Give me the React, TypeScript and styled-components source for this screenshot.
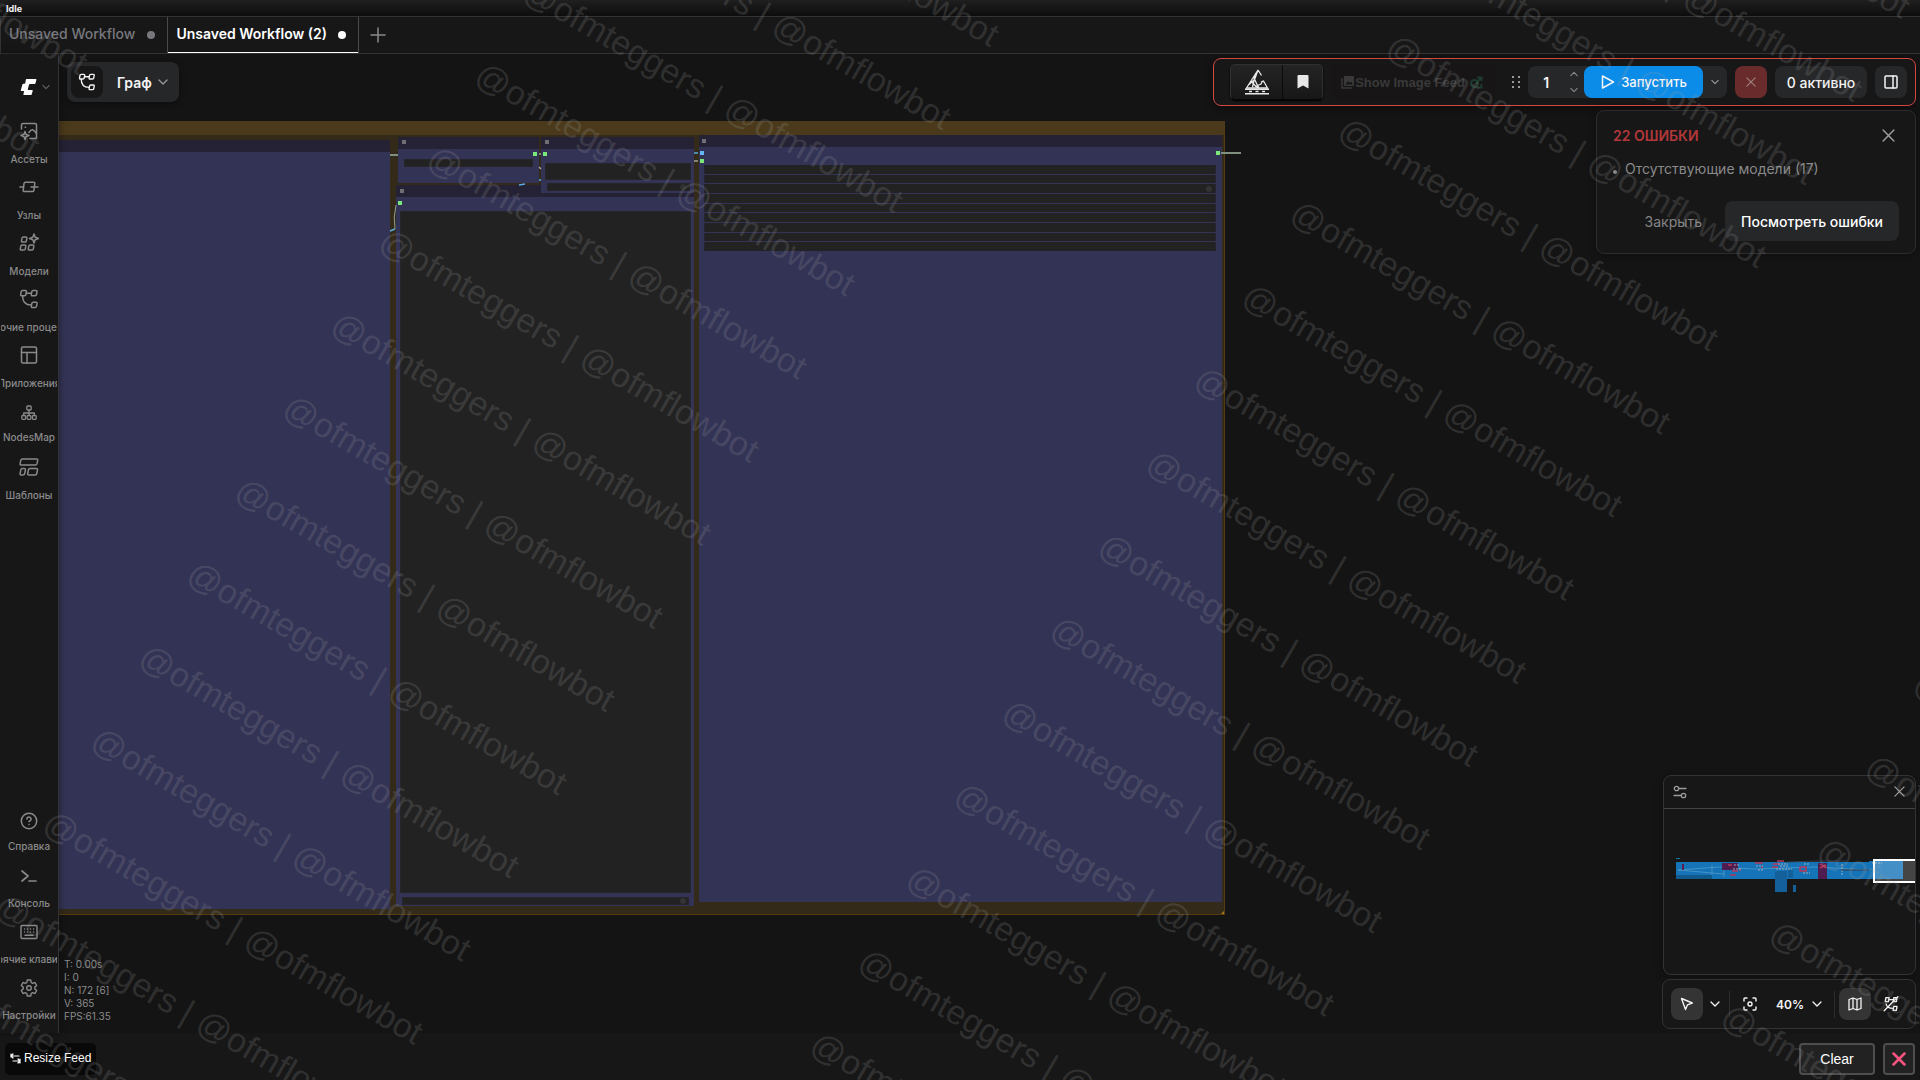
import React from "react";
import styled, { createGlobalStyle, css } from "styled-components";

const colors = {
  canvas: "#141414",
  panel: "#171718",
  raised: "#262729",
  line: "#333335",
  text: "#f5f5f5",
  muted: "#8a8a8a",
  node: "#333355",
  nodeTitle: "#242234",
  widget: "#222222",
};

const Global = createGlobalStyle`
  *, *::before, *::after { box-sizing: border-box; }
  html, body { margin: 0; height: 100%; background: ${colors.panel}; overflow: hidden; }
  body { font-family: Inter, "Liberation Sans", sans-serif; font-size: 14px; color: ${colors.text}; }
  button, input { font: inherit; color: inherit; }
  button { border: 0; padding: 0; background: none; cursor: pointer; }
  svg { display: block; flex: none; }
`;

const Page = styled.div`
  display: flex;
  flex-direction: column;
  height: 100vh;
  position: relative;
`;

/* ---------- top ---------- */

const StatusBar = styled.header`
  height: 16px;
  padding-left: 6px;
  font-size: 9px;
  line-height: 17px;
  font-weight: 700;
  background: linear-gradient(#1f1f1f, #0d0d0d);
  flex: none;
`;

const TabBar = styled.nav`
  display: flex;
  height: 38px;
  flex: none;
  border: 1px solid ${colors.line};
  border-right: 0;
  background: ${colors.panel};
`;

const Tab = styled.button<{ $active?: boolean }>`
  display: flex;
  align-items: center;
  gap: ${(p) => (p.$active ? 11 : 12)}px;
  padding: 0 12px 4px 8px;
  border-right: 1px solid #4a4a4c;
  color: ${(p) => (p.$active ? "#ffffff" : "#77777d")};
  font-weight: ${(p) => (p.$active ? 600 : 500)};
  ${(p) => p.$active && css`box-shadow: inset 0 -1px #ffffff;`}
`;

const Dot = styled.span`
  width: 8px;
  height: 8px;
  margin-top: 4px;
  border-radius: 50%;
  background: currentColor;
`;

const AddTab = styled.button`
  width: 38px;
  display: grid;
  place-items: center;
  color: ${colors.muted};
`;

const Main = styled.main`
  flex: 1;
  min-height: 0;
  display: flex;
`;

/* ---------- sidebar ---------- */

const Sidebar = styled.aside`
  width: 59px;
  flex: none;
  display: flex;
  flex-direction: column;
  background: ${colors.panel};
  border-right: 1px solid ${colors.line};
  box-shadow: 0 0 8px rgba(0, 0, 0, 0.4);
  z-index: 1;
`;

const LogoButton = styled.button`
  display: flex;
  align-items: center;
  gap: 5px;
  height: 48px;
  padding-left: 20px;
  margin: 9px 0 4px;
`;

const SideGroup = styled.div<{ $bottom?: boolean }>`
  display: flex;
  flex-direction: column;
  ${(p) => p.$bottom && css`margin-top: auto; margin-bottom: 5px;`}
`;

const SideItem = styled.button<{ $gap: number; $top: number }>`
  height: 56px;
  overflow: hidden;
  display: flex;
  flex-direction: column;
  align-items: center;
  justify-content: center;
  gap: ${(p) => p.$gap}px;
  padding-top: ${(p) => p.$top}px;
  color: ${colors.muted};
  font-size: 10px;
  line-height: 12px;
  font-weight: 500;
  white-space: nowrap;
`;

const SideLabel = styled.span`
  display: flex;
  justify-content: center;
  width: 56px;
  overflow: hidden;
`;

/* ---------- graph canvas ---------- */

const Canvas = styled.section`
  flex: 1;
  position: relative;
  overflow: hidden;
  background: ${colors.canvas};
`;

const World = styled.div`
  position: absolute;
  inset: 0;
  transform: translate(-59px, -54px);
`;

type Box = { $x: number; $y: number; $w: number; $h: number };

const place = css<Box>`
  position: absolute;
  left: ${(p) => p.$x}px;
  top: ${(p) => p.$y}px;
  width: ${(p) => p.$w}px;
  height: ${(p) => p.$h}px;
`;

const GroupBox = styled.div<Box>`
  ${place}
  background: #332a19;
  border: 1px solid #553b12;
  border-top: 14px solid #4a3a1b;
`;

const NodeBox = styled.div<Box>`
  ${place}
  background: ${colors.node};
  border-top: 12px solid ${colors.nodeTitle};
`;

const Widget = styled.div<Box>`
  ${place}
  background: ${colors.widget};
  border: 1px solid #26252c;
`;

const WidgetStack = styled.div<Box>`
  ${place}
  display: grid;
  gap: 1px;
  grid-auto-rows: 1fr;
`;

const StackRow = styled.div`
  background: ${colors.widget};
  border: 1px solid #26252f;
  border-width: 0 1px;
`;

const Slot = styled.div<{ $x: number; $y: number; $color: string }>`
  position: absolute;
  left: ${(p) => p.$x}px;
  top: ${(p) => p.$y}px;
  width: 4px;
  height: 4px;
  background: ${(p) => p.$color};
`;

const Links = styled.svg`
  position: absolute;
  left: 0;
  top: 0;
  overflow: visible;
`;

const Stats = styled.div`
  position: absolute;
  left: 5px;
  bottom: 10px;
  font-size: 10px;
  line-height: 13px;
  color: #8c8c8c;
  white-space: pre-line;
`;

/* ---------- floating panels ---------- */

const Overlay = styled.div`
  position: absolute;
  inset: 0;
  display: flex;
  justify-content: space-between;
  align-items: flex-start;
  padding: 4px 4px 4px 8px;
`;

const RightColumn = styled.div`
  display: flex;
  flex-direction: column;
  align-items: flex-end;
  height: 100%;
`;

const ModeButton = styled.button`
  display: flex;
  align-items: center;
  height: 40px;
  margin-top: 4px;
  padding: 0 11px 0 4px;
  border-radius: 8px;
  background: ${colors.raised};
  font-weight: 600;
  box-shadow: 0 2px 6px rgba(0, 0, 0, 0.4);
`;

const ModeIcon = styled.span`
  width: 32px;
  height: 32px;
  margin-right: 14px;
  border-radius: 8px;
  display: grid;
  place-items: center;
  background: ${colors.panel};
`;

const ModeText = styled.span`
  margin-right: 6px;
`;

const Dim = styled.span`
  color: #9a9a9a;
`;

const Toolbar = styled.div`
  display: flex;
  align-items: center;
  height: 48px;
  padding: 0 8px 0 16px;
  border: 1px solid #d3483f;
  border-radius: 8px;
  background: ${colors.panel};
  box-shadow: 0 2px 8px rgba(0, 0, 0, 0.4);
`;

const ExtButtons = styled.div`
  display: flex;
  height: 36px;
  border: 1px solid #303030;
  border-bottom-color: #050505;
  border-radius: 5px;
  background: linear-gradient(#242424, #171717);
  box-shadow: 0 1px 2px #000000;
`;

const ExtButton = styled.button<{ $w: number }>`
  width: ${(p) => p.$w}px;
  display: grid;
  place-items: center;
  & + & { border-left: 1px solid #0a0a0a; }
`;

const FeedToggle = styled.button`
  display: flex;
  align-items: center;
  height: 36px;
  width: 164px;
  margin: 0 15px 0 8px;
  padding-left: 10px;
  border-radius: 4px;
  background: #171516;
  color: #39393a;
  font: 700 13px "Liberation Sans", Arial, sans-serif;
`;

const Grip = styled.span`
  margin: 0 7px 0 1px;
`;

const BatchGroup = styled.div`
  display: flex;
  height: 32px;
  border-radius: 8px;
  background: ${colors.raised};
`;

const CountInput = styled.input`
  width: 36px;
  border: 0;
  padding: 0;
  background: none;
  text-align: center;
  font-weight: 600;
  outline: none;
`;

const Steppers = styled.div`
  width: 20px;
  display: flex;
  flex-direction: column;
  justify-content: center;
  align-items: center;
  gap: 8px;
  color: ${colors.muted};
`;

const RunButton = styled.button`
  display: flex;
  align-items: center;
  gap: 6px;
  height: 32px;
  padding: 0 16px 0 17px;
  border-radius: 8px;
  background: #0b8ce9;
  font-size: 13px;
  font-weight: 500;
`;

const RunMenu = styled.button`
  width: 24px;
  display: grid;
  place-items: center;
  color: #a0a0a0;
`;

const ToolButton = styled.button<{ $danger?: boolean; $wide?: boolean }>`
  height: 32px;
  width: ${(p) => (p.$wide ? 92 : 32)}px;
  margin-left: 8px;
  border-radius: 8px;
  display: grid;
  place-items: center;
  font-weight: 500;
  background: ${(p) => (p.$danger ? "#692b2b" : colors.raised)};
  color: ${(p) => (p.$danger ? "#a08080" : colors.text)};
`;

const ErrorCard = styled.section`
  width: 320px;
  margin-top: 4px;
  padding: 12px 16px;
  border: 1px solid #2c2c2e;
  border-radius: 8px;
  background: ${colors.panel};
  box-shadow: 0 2px 8px rgba(0, 0, 0, 0.3);
`;

const ErrorHead = styled.div`
  display: flex;
  justify-content: space-between;
  align-items: center;
  height: 24px;
  padding-right: 4px;
`;

const ErrorTitle = styled.h2`
  margin: 0;
  font-size: 14px;
  font-weight: 600;
  color: #b3383a;
`;

const ErrorList = styled.ul`
  list-style: none;
  margin: 12px 0 22px;
  padding: 0;
  line-height: 20px;
  color: ${colors.muted};
`;

const ErrorItem = styled.li`
  display: flex;
  align-items: center;
  gap: 8px;
  &::before {
    content: "";
    width: 4px;
    height: 4px;
    margin-top: 6px;
    border-radius: 50%;
    background: currentColor;
  }
`;

const ErrorActions = styled.div`
  display: flex;
  justify-content: flex-end;
  gap: 7px;
`;

const ActionButton = styled.button<{ $solid?: boolean }>`
  height: 40px;
  padding: 0 16px;
  border-radius: 8px;
  font-weight: ${(p) => (p.$solid ? 500 : 400)};
  color: ${(p) => (p.$solid ? "#ffffff" : "#858585")};
  background: ${(p) => (p.$solid ? colors.raised : "transparent")};
`;

const PlainButton = styled.button`
  display: grid;
  place-items: center;
  color: #a0a0a0;
`;

const MiniMap = styled.section`
  width: 253px;
  margin-top: auto;
  border: 1px solid ${colors.line};
  border-radius: 8px;
  overflow: hidden;
  background: ${colors.panel};
  box-shadow: 0 2px 8px rgba(0, 0, 0, 0.3);
`;

const MiniHead = styled.div`
  display: flex;
  justify-content: space-between;
  align-items: center;
  height: 33px;
  padding: 0 10px 1px 9px;
  border-bottom: 1px solid #444446;
  color: #9a9a9a;
`;

const ViewBar = styled.div`
  display: flex;
  align-items: center;
  width: 254px;
  height: 50px;
  margin-top: 4px;
  padding: 0 4px 0 8px;
  border: 1px solid ${colors.line};
  border-radius: 8px;
  background: ${colors.panel};
`;

const ViewButton = styled.button<{ $on?: boolean; $w?: number }>`
  width: ${(p) => p.$w ?? 32}px;
  height: 32px;
  border-radius: 8px;
  display: flex;
  align-items: center;
  justify-content: center;
  gap: 8px;
  background: ${(p) => (p.$on ? "#343435" : "transparent")};
  font-size: 12px;
  font-weight: 600;
`;

const Divider = styled.span`
  width: 1px;
  height: 27px;
  margin: 0 4px 0 2px;
  background: #2c2c2e;
`;

/* ---------- image feed footer ---------- */

const Footer = styled.footer`
  flex: none;
  height: 47px;
  display: flex;
  align-items: center;
  gap: 8px;
  padding: 5px 5px 0;
  background: ${colors.panel};
  font-family: "Liberation Sans", Arial, sans-serif;
`;

const ResizeButton = styled.button`
  display: flex;
  align-items: center;
  gap: 3px;
  height: 32px;
  margin: 0 auto 0 0;
  padding: 0 5px 2px;
  border-radius: 5px;
  background: #090909;
  color: #ffffff;
  font-size: 12px;
`;

const FeedButton = styled.button<{ $w: number }>`
  width: ${(p) => p.$w}px;
  height: 32px;
  display: grid;
  place-items: center;
  border: 2px solid #4e4e4e;
  border-radius: 4px;
  background: #222222;
  color: #ffffff;
`;

/* ---------- watermark ---------- */

const MarkLayer = styled.div`
  position: absolute;
  inset: 0;
  overflow: hidden;
  pointer-events: none;
  z-index: 5;
`;

const MarkSheet = styled.div`
  position: absolute;
  left: 0;
  top: 0;
  transform-origin: 0 0;
  transform: rotate(30deg) translate(-325px, -994px);
`;

const MarkRow = styled.div`
  display: grid;
  grid-template-columns: repeat(4, 775px);
  height: 96px;
  line-height: 96px;
  font-family: "Liberation Sans", Arial, sans-serif;
  font-size: 34px;
  color: rgba(160, 160, 160, 0.21);
  white-space: nowrap;
`;

/* ---------- icons ---------- */

type IconProps = { size?: number; box?: number; w?: number; children: React.ReactNode };

const Icon = ({ size = 20, box = 20, w = 1.5, children }: IconProps) => (
  <svg
    width={size}
    height={size}
    viewBox={`0 0 ${box} ${box}`}
    fill="none"
    stroke="currentColor"
    strokeWidth={w}
    strokeLinecap="round"
    strokeLinejoin="round"
    aria-hidden="true"
  >
    {children}
  </svg>
);

const Chevron = ({ size = 10, up = false }: { size?: number; up?: boolean }) => (
  <Icon size={size} box={10} w={1.3}>
    <path d={up ? "M1 7l4-4 4 4" : "M1 3l4 4 4-4"} />
  </Icon>
);

const Cross = ({ size = 12, w = 1.3 }: { size?: number; w?: number }) => (
  <Icon size={size} box={12} w={w}>
    <path d="M1 1l10 10M11 1L1 11" />
  </Icon>
);

const FlowIcon = ({ size = 20 }: { size?: number }) => (
  <Icon size={size}>
    <path d="M3.6 1.500h2.800q1.200 0 1 1.200l-.5 2.800q-.2 1.200-1.400 1.200H2.700q-1.200 0-1-1.200l.5-2.800q.2-1.200 1.400-1.200z" />
    <path d="M14.200 1.500H17q1.200 0 1 1.200l-.5 2.800q-.2 1.200-1.400 1.200h-2.800q-1.200 0-1-1.200l.5-2.800q.2-1.200 1.400-1.200z" />
    <path d="M14.200 13.300H17q1.200 0 1 1.200l-.5 2.800q-.2 1.200-1.400 1.200h-2.800q-1.200 0-1-1.200l.5-2.800q.2-1.200 1.400-1.200z" />
    <path d="M7.300 4.200h5M3.600 7c0 5.500 2.700 9 8.500 9" />
  </Icon>
);

const AssetsIcon = () => (
  <Icon>
    <path d="M2.500 8V4q0-1.500 1.500-1.500h12q1.500 0 1.500 1.500v12q0 1.500-1.500 1.500h-5" />
    <path d="M10 11.500c2.500-4 4.500-3.500 7.500 1M6.200 6.200h.4" />
    <path d="M6 10.500l1.100 2.900L10 14.500l-2.900 1.100L6 18.500l-1.100-2.900L2 14.500l2.900-1.100z" />
  </Icon>
);

const NodesIcon = () => (
  <Icon>
    <path d="M6.500 5.200h8q1.500 0 1.300 1.300l-.9 6.800q-.2 1.300-1.600 1.300H5.500q-1.500 0-1.300-1.300l.8-6.800q.2-1.300 1.500-1.300z" />
    <path d="M1 10h3.500M12 10h7" />
  </Icon>
);

const ModelsIcon = () => (
  <Icon>
    <path d="M4.300 4h2.500q1.200 0 1 1.200L7.400 7.800Q7.200 9 6.100 9H3.500q-1.200 0-1-1.200l.5-2.600Q3.200 4 4.300 4z" />
    <path d="M3.200 12h2.600q1.200 0 1 1.200l-.5 2.600q-.2 1.200-1.300 1.200H2.300q-1.200 0-1-1.200l.5-2.600Q2 12 3.200 12z" />
    <path d="M11.200 12h2.600q1.200 0 1 1.200l-.5 2.600q-.2 1.200-1.300 1.200h-2.700q-1.200 0-1-1.200l.5-2.600q.2-1.200 1.400-1.200z" />
    <path d="M15 1l1.200 3.200L19.500 5.500l-3.300 1.200L15 10l-1.200-3.300-3.300-1.200 3.300-1.300z" />
  </Icon>
);

const AppsIcon = () => (
  <Icon>
    <rect x="2.500" y="2" width="15" height="16" rx="1.500" />
    <path d="M2.500 7.500h15M8 7.500V18" />
  </Icon>
);

const MapTreeIcon = () => (
  <Icon size={16} box={16} w={1.3}>
    <rect x="5.800" y="1" width="4.400" height="4" rx="1" />
    <rect x="0.800" y="10.500" width="3.800" height="3.800" rx="1" />
    <rect x="6.100" y="10.500" width="3.800" height="3.800" rx="1" />
    <rect x="11.400" y="10.500" width="3.800" height="3.800" rx="1" />
    <path d="M8 5v5.500M2.700 10.500V8h10.600v2.500" />
  </Icon>
);

const TemplatesIcon = () => (
  <Icon>
    <path d="M3.500 2h14q1.500 0 1.200 1.300l-.7 3.400q-.3 1.300-1.700 1.300h-14Q.8 8 1.100 6.700l.7-3.400Q2.100 2 3.500 2z" />
    <path d="M3.400 11.500h1.800q1.400 0 1.200 1.300l-.7 3.700q-.3 1.500-1.700 1.500H2.200Q.8 18 1.100 16.500l.7-3.700q.3-1.300 1.600-1.300z" />
    <path d="M11 11.500h6.300q1.400 0 1.200 1.300l-.7 3.700q-.3 1.500-1.700 1.500H9.800q-1.400 0-1.100-1.500l.7-3.700q.3-1.300 1.600-1.300z" />
  </Icon>
);

const HelpIcon = () => (
  <Icon size={18} box={18}>
    <circle cx="9" cy="9" r="7.700" />
    <path d="M6.900 7q.2-2 2.100-2t2.100 1.900Q11.100 8.300 9 9.500M9 12.500v.1" />
  </Icon>
);

const ConsoleIcon = () => (
  <Icon size={18} box={18} w={1.700}>
    <path d="M2 4l6 5-6 5M9 14h7" />
  </Icon>
);

const KeyboardIcon = () => (
  <Icon size={18} box={18} w={1.400}>
    <rect x="1" y="2.500" width="16" height="13" rx="1" />
    <path d="M4.500 6h.1M7.500 6h.1M10.500 6h.1M13.500 6h.1M4.500 9h.1M7.500 9h.1M10.500 9h.1M13.500 9h.1M5 12.300h8" />
  </Icon>
);

const GearIcon = () => (
  <Icon size={18} box={18} w={1.400}>
    <path d="M7.300 1h3.400l.5 2.500 1.400.8 2.400-.8 1.700 3-1.900 1.600v1.800l1.900 1.600-1.700 3-2.400-.8-1.400.8-.5 2.500H7.300l-.5-2.500-1.400-.8-2.400.8-1.700-3 1.900-1.600V8.100L1.300 6.500l1.700-3 2.400.8 1.400-.8z" />
    <circle cx="9" cy="9" r="2.300" />
  </Icon>
);

const LogoMark = () => (
  <svg width="17" height="18" viewBox="0 0 17 18" fill="#ffffff" aria-hidden="true">
    <path d="M6.600 1h9.200q.8 0 .6.800l-.9 3.400q-.2.800-1 .8H10q-.8 0-1 .8l-1.200 4.400q-.2.800.6.800h3.700q.8 0 .6.800l-.9 3.400q-.2.800-1 .8H4q-.8 0-.6-.8l.6-2.400q.2-.8-.6-.8H1.400q-.8 0-.6-.8l1.600-5.600q.2-.8 1-.8h.9q.8 0 1-.8l.5-3.200Q6 1 6.600 1z" />
  </svg>
);

const CraneIcon = () => (
  <svg width="24" height="26" viewBox="0 0 24 26" fill="none" stroke="#e8e8e8" strokeWidth="1.300" aria-hidden="true">
    <path d="M13 1L1.500 19h21l-4-7-2.500 1.200M13 1l3.500 5.500M13 1L10 9.500M8.500 8l4 8.500M10.500 5l-3 13M6 12l4.500 5M3.500 16l5-4.500M12.500 16.500l3.500-1.500 1.500-3M10 17l4 1" />
    <path d="M0 20.300h24M0 24.800h24M4 22.500h3M10.500 22.500h3M17 22.500h3" strokeWidth="1.500" />
  </svg>
);

const BookmarkIcon = () => (
  <svg width="12" height="14" viewBox="0 0 12 14" fill="#e8e8e8" aria-hidden="true">
    <path d="M1.500 0h9Q11.500 0 11.500 1v12.500L6 10.500.5 13.500V1q0-1 1-1z" />
  </svg>
);

const GalleryIcon = () => (
  <svg width="14" height="14" viewBox="0 0 14 14" aria-hidden="true">
    <path d="M1 3v10h10" fill="none" stroke="#39393a" strokeWidth="1.500" />
    <rect x="3" y="1" width="10" height="10" rx="1" fill="#39393a" />
    <path d="M4.500 9.500L7 6l1.500 2L10 6.500l2 3z" fill="#171516" />
  </svg>
);

const PluginBadge = () => (
  <svg width="14" height="14" viewBox="0 0 14 14" fill="none" stroke="#1d3a2e" strokeWidth="2" aria-hidden="true">
    <path d="M8 2.500h4.500V6M12 3L7 8" />
    <circle cx="5.500" cy="8.500" r="3.500" />
    <path d="M9 12.500h3.500V9" />
  </svg>
);

const GripIcon = () => (
  <svg width="10" height="14" viewBox="0 0 10 14" fill="#9a9a9a" aria-hidden="true">
    {[1, 6, 11].map((y) => (
      <React.Fragment key={y}>
        <rect x="1" y={y} width="2" height="2" />
        <rect x="7" y={y} width="2" height="2" />
      </React.Fragment>
    ))}
  </svg>
);

const SlidersIcon = () => (
  <Icon size={14} box={14} w={1.300}>
    <circle cx="3.500" cy="3.500" r="2.200" />
    <circle cx="10.500" cy="10.500" r="2.200" />
    <path d="M5.800 3.500H13M1 10.500h7.200" />
  </Icon>
);

const MiniMapDrawing = () => (
  <svg width="251" height="165" viewBox="0 0 251 165" role="img" aria-label="Мини-карта">
    <rect x="12" y="49" width="4" height="1" fill="#1672ab" />
    <rect x="12" y="53" width="218" height="17" fill="#1573b8" />
    <rect x="12" y="66" width="36" height="4" fill="#115a8e" />
    <rect x="205" y="52" width="34" height="18" fill="#1573b8" />
    <path d="M14 61L55 58 90 60 150 58 206 61M14 61L60 65M48 56v10M60 54v14" stroke="#5a9fc9" strokeWidth="1" fill="none" opacity=".7" />
    <rect x="18" y="55" width="2" height="6" fill="#5b1d52" />
    <rect x="58" y="54" width="16" height="7" fill="#4f1c50" />
    <rect x="154" y="54" width="9" height="16" fill="#4f1c50" />
    <path d="M64 56h4M68 62h6M66 66h6M75 61h2M91 54h8M97 58h2M109 55h7M108 58h6M113 52h7M136 58h6v4h-6zM156 55l6 4M156 59l6-3" stroke="#b8395a" strokeWidth="1.500" fill="none" />
    <path d="M70 56h6M69 60h8M92 57h7M94 61h5M114 55h10M116 57h9M112 60h16M140 55h6M139 64h7M178 55v12M208 54h10" stroke="#a9b6c0" strokeWidth="1.500" fill="none" opacity=".6" strokeDasharray="2 1" />
    <rect x="111" y="62" width="12" height="21" fill="#14609a" />
    <rect x="124" y="61" width="5" height="8" fill="#14609a" />
    <rect x="129" y="76" width="3" height="7" fill="#14609a" />
    <path d="M177 61h28M122 53l30-1h30" stroke="#343a44" strokeWidth="1" fill="none" />
    <rect x="210" y="51" width="60" height="22" fill="#ffffff" fillOpacity=".2" stroke="#ffffff" strokeWidth="2" />
  </svg>
);

/* ---------- data ---------- */

type SideEntry = { label: string; icon: React.ReactNode; gap?: number; top?: number };

const topItems: SideEntry[] = [
  { label: "Ассеты", icon: <AssetsIcon /> },
  { label: "Узлы", icon: <NodesIcon /> },
  { label: "Модели", icon: <ModelsIcon /> },
  { label: "Рабочие процессы", icon: <FlowIcon /> },
  { label: "Приложения", icon: <AppsIcon /> },
  { label: "NodesMap", icon: <MapTreeIcon />, gap: 10, top: 2 },
  { label: "Шаблоны", icon: <TemplatesIcon /> },
];

const bottomItems: SideEntry[] = [
  { label: "Справка", icon: <HelpIcon />, gap: 10 },
  { label: "Консоль", icon: <ConsoleIcon /> },
  { label: "Горячие клавиши", icon: <KeyboardIcon /> },
  { label: "Настройки", icon: <GearIcon /> },
];

const nodes = [
  [20, 140, 370, 769],
  [396, 185, 298, 721],
  [398, 137, 141, 46],
  [541, 137, 153, 56],
  [699, 135, 523, 767],
];

const widgets = [
  [404, 159, 129, 8],
  [545, 163, 146, 17],
  [547, 183, 143, 8],
  [400, 211, 291, 682],
  [402, 897, 287, 8],
];

const slots: [number, number, string][] = [
  [402, 140, "#6f6f73"],
  [545, 140, "#6f6f73"],
  [400, 189, "#6f6f73"],
  [702, 139, "#6f6f73"],
  [533, 152, "#7be87b"],
  [543, 152, "#7be87b"],
  [398, 201, "#7be87b"],
  [700, 151, "#64b5f6"],
  [700, 159, "#7be87b"],
  [1216, 151, "#7be87b"],
];

const stats = "T: 0.00s\nI: 0\nN: 172 [6]\nV: 365\nFPS:61.35";

const Side = ({ label, icon, gap = 12, top = 0 }: SideEntry) => (
  <SideItem $gap={gap} $top={top}>
    {icon}
    <SideLabel>{label}</SideLabel>
  </SideItem>
);

const Graph = () => (
  <World>
    <GroupBox $x={-40} $y={121} $w={1265} $h={794} />
    {nodes.map(([x, y, w, h]) => (
      <NodeBox key={`${x}-${y}`} $x={x} $y={y} $w={w} $h={h} />
    ))}
    {widgets.map(([x, y, w, h]) => (
      <Widget key={`${x}-${y}`} $x={x} $y={y} $w={w} $h={h} />
    ))}
    <WidgetStack $x={704} $y={165} $w={512} $h={86}>
      {Array.from({ length: 9 }, (_, i) => (
        <StackRow key={i} />
      ))}
    </WidgetStack>
    <Links width="1920" height="1080" fill="none">
      <path d="M390 155h8M1221 153h20" stroke="#7f8f80" strokeWidth="2" />
      <path d="M396 205q-3 12-1 24" stroke="#8fa08c" />
      <path d="M390 231l5-2M519 185l6-1M539 180h2M694 153h4" stroke="#5aa9e0" strokeWidth="1.500" />
      <path d="M539 154h2M539 167l2 2M694 161h4" stroke="#a0a890" strokeWidth="1.500" />
      <circle cx="683" cy="187" r="3" fill="#303030" />
      <circle cx="1209" cy="189" r="3" fill="#333333" />
      <circle cx="683" cy="901" r="3" fill="#333333" />
      <path d="M1224 911v3h-3z" fill="#b07a1a" />
    </Links>
    {slots.map(([x, y, c]) => (
      <Slot key={`${x}-${y}`} $x={x} $y={y} $color={c} />
    ))}
  </World>
);

export default function App() {
  return (
    <Page>
      <Global />
      <StatusBar>Idle</StatusBar>
      <TabBar>
        <Tab>
          Unsaved Workflow
          <Dot />
        </Tab>
        <Tab $active>
          Unsaved Workflow (2)
          <Dot />
        </Tab>
        <AddTab aria-label="Новый">
          <Icon size={16} box={16} w={1.500}>
            <path d="M8 1v14M1 8h14" />
          </Icon>
        </AddTab>
      </TabBar>

      <Main>
        <Sidebar>
          <LogoButton aria-label="ComfyUI">
            <LogoMark />
            <Icon size={8} box={10} w={1.300}>
              <path d="M1 3l4 4 4-4" stroke="#666666" />
            </Icon>
          </LogoButton>
          <SideGroup>
            {topItems.map((it) => (
              <Side key={it.label} {...it} />
            ))}
          </SideGroup>
          <SideGroup $bottom>
            {bottomItems.map((it) => (
              <Side key={it.label} {...it} />
            ))}
          </SideGroup>
        </Sidebar>

        <Canvas>
          <Graph />
          <Stats>{stats}</Stats>
          <Overlay>
            <ModeButton>
              <ModeIcon>
                <FlowIcon size={18} />
              </ModeIcon>
              <ModeText>Граф</ModeText>
              <Dim>
                <Chevron />
              </Dim>
            </ModeButton>

            <RightColumn>
              <Toolbar>
                <ExtButtons>
                  <ExtButton $w={51} aria-label="Manager">
                    <CraneIcon />
                  </ExtButton>
                  <ExtButton $w={40} aria-label="Bookmark">
                    <BookmarkIcon />
                  </ExtButton>
                </ExtButtons>
                <FeedToggle>
                  <GalleryIcon />
                  Show Image Feed&nbsp;
                  <PluginBadge />
                </FeedToggle>
                <Grip>
                  <GripIcon />
                </Grip>
                <BatchGroup>
                  <CountInput aria-label="Количество" defaultValue="1" />
                  <Steppers>
                    <Chevron size={8} up />
                    <Chevron size={8} />
                  </Steppers>
                  <RunButton>
                    <Icon size={14} box={14} w={1.500}>
                      <path d="M1.500 1v12L12.500 7z" />
                    </Icon>
                    Запустить
                  </RunButton>
                  <RunMenu aria-label="Режим запуска">
                    <Chevron size={8} />
                  </RunMenu>
                </BatchGroup>
                <ToolButton $danger aria-label="Отменить">
                  <Cross size={10} />
                </ToolButton>
                <ToolButton $wide>0 активно</ToolButton>
                <ToolButton aria-label="Панель">
                  <Icon size={14} box={14}>
                    <rect x="1" y="1" width="12" height="12" rx="1" />
                    <path d="M9 1v12" />
                  </Icon>
                </ToolButton>
              </Toolbar>

              <ErrorCard>
                <ErrorHead>
                  <ErrorTitle>22 ОШИБКИ</ErrorTitle>
                  <PlainButton aria-label="Закрыть панель">
                    <Cross size={13} />
                  </PlainButton>
                </ErrorHead>
                <ErrorList>
                  <ErrorItem>Отсутствующие модели (17)</ErrorItem>
                </ErrorList>
                <ErrorActions>
                  <ActionButton>Закрыть</ActionButton>
                  <ActionButton $solid>Посмотреть ошибки</ActionButton>
                </ErrorActions>
              </ErrorCard>

              <MiniMap>
                <MiniHead>
                  <SlidersIcon />
                  <PlainButton aria-label="Закрыть карту">
                    <Cross size={11} />
                  </PlainButton>
                </MiniHead>
                <MiniMapDrawing />
              </MiniMap>
              <ViewBar>
                <ViewButton $on aria-label="Выбор">
                  <Icon size={14} box={14} w={1.400}>
                    <path d="M1.500 1.500l4 11 2-4.700 4.800-1.800z" />
                  </Icon>
                </ViewButton>
                <ViewButton $w={24} aria-label="Режим">
                  <Chevron />
                </ViewButton>
                <Divider />
                <ViewButton aria-label="По размеру">
                  <Icon size={14} box={14} w={1.400}>
                    <path d="M1 4V2q0-1 1-1h2M10 1h2q1 0 1 1v2M13 10v2q0 1-1 1h-2M4 13H2q-1 0-1-1v-2" />
                    <circle cx="7" cy="7" r="2" />
                  </Icon>
                </ViewButton>
                <ViewButton $w={66}>
                  40%
                  <Chevron />
                </ViewButton>
                <Divider />
                <ViewButton $on aria-label="Карта">
                  <Icon size={14} box={14} w={1.300}>
                    <path d="M1 2.500L5 1l4 1.500L13 1v10.500L9 13l-4-1.500L1 13zM5 1v10.500M9 2.500V13" />
                  </Icon>
                </ViewButton>
                <ViewButton $w={40} aria-label="Связи">
                  <Icon size={16} box={20} w={1.700}>
                    <path d="M3.600 2h4L6.800 7h-4zM13.500 2h4l-.8 5h-4zM13.500 13h4l-.8 5h-4z" />
                    <path d="M7.500 4.500h5M4 10c.5 3.500 3 5.500 8.500 5.500M18.500 1L1.500 18.500" />
                  </Icon>
                </ViewButton>
              </ViewBar>
            </RightColumn>
          </Overlay>
        </Canvas>
      </Main>

      <Footer>
        <ResizeButton>
          <Icon size={11} box={11} w={1.200}>
            <path d="M1 1v3M1 3h8M1 3l2-2M1 3l2 2M10 6v4M10 8H3M10 8L8 6M10 8l-2 2" />
          </Icon>
          Resize Feed
        </ResizeButton>
        <FeedButton $w={76}>Clear</FeedButton>
        <FeedButton $w={32} aria-label="Close feed">
          <Icon size={14} box={14} w={2.500}>
            <path d="M1.500 1.500l11 11M12.500 1.500l-11 11" stroke="#f7557f" />
          </Icon>
        </FeedButton>
      </Footer>

      <MarkLayer aria-hidden="true">
        <MarkSheet>
          {Array.from({ length: 21 }, (_, r) => (
            <MarkRow key={r}>
              {Array.from({ length: 4 }, (_, c) => (
                <span key={c}>@ofmteggers | @ofmflowbot</span>
              ))}
            </MarkRow>
          ))}
        </MarkSheet>
      </MarkLayer>
    </Page>
  );
}
